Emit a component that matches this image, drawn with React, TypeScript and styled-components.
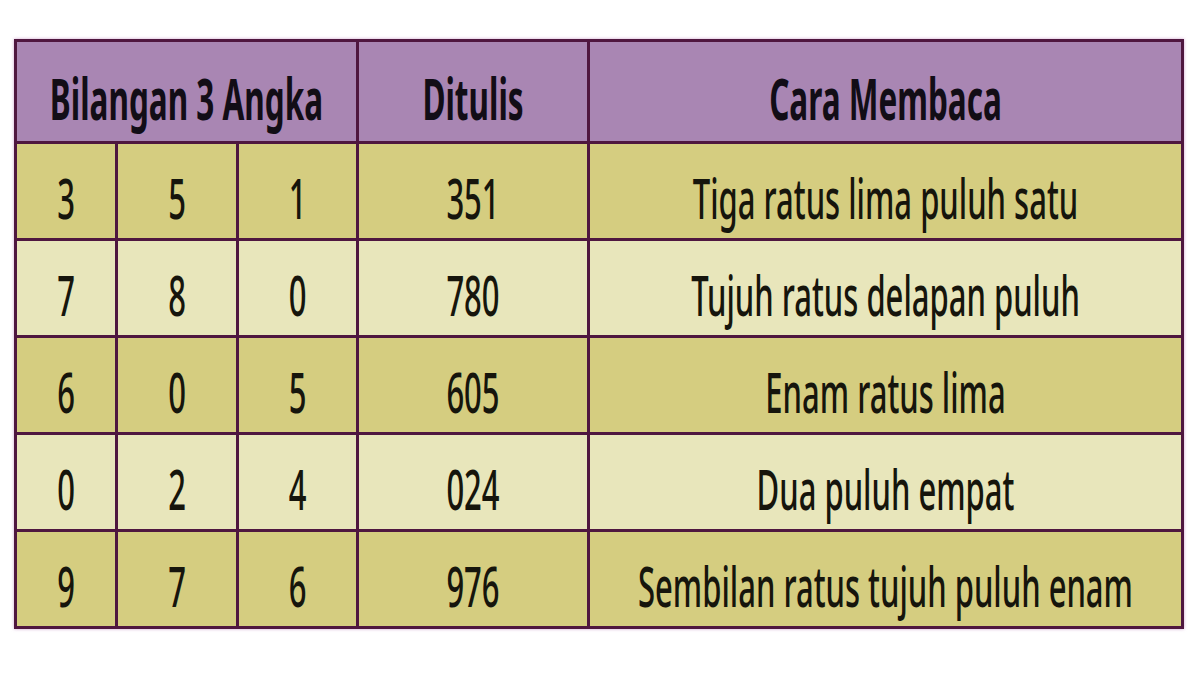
import React from "react";
import styled, { createGlobalStyle } from "styled-components";

const Global = createGlobalStyle`
  html, body { margin: 0; padding: 0; background: #ffffff; }
  body { font-family: "Noto Sans", "Open Sans", "Liberation Sans", sans-serif; }
`;

const Page = styled.div`
  width: 1200px;
  height: 675px;
  box-sizing: border-box;
  padding: 39px 0 0 14px;
  background: #fff;
`;

const Table = styled.table`
  border-collapse: collapse;
  table-layout: fixed;
  width: 1170px;
  border: 3px solid #4f173f;
  box-shadow: 0 0 3px rgba(170, 90, 170, 0.55);
`;

const HeadCell = styled.th`
  background: #a986b3;
  border: 3px solid #4f173f;
  height: 99px;
  padding: 0;
  text-align: center;
  font-weight: 700;
  color: #120d16;
`;

const Cell = styled.td<{ $shade: "dark" | "light" }>`
  background: ${(p) => (p.$shade === "dark" ? "#d5cd80" : "#e8e6bb")};
  border: 3px solid #4f173f;
  height: 94px;
  padding: 0;
  text-align: center;
  color: #16150c;
`;

const Txt = styled.span<{ $bold?: boolean }>`
  display: inline-block;
  font-size: ${(p) => (p.$bold ? "31.5px" : "31px")};
  font-weight: ${(p) => (p.$bold ? 700 : 500)};
  line-height: 40px;
  transform: scaleY(1.8);
  transform-origin: center;
  position: relative;
  top: 6px;
  white-space: nowrap;
`;

const rows: [string, string, string, string, string][] = [
  ["3", "5", "1", "351", "Tiga ratus lima puluh satu"],
  ["7", "8", "0", "780", "Tujuh ratus delapan puluh"],
  ["6", "0", "5", "605", "Enam ratus lima"],
  ["0", "2", "4", "024", "Dua puluh empat"],
  ["9", "7", "6", "976", "Sembilan ratus tujuh puluh enam"],
];

export default function App() {
  return (
    <>
      <Global />
      <Page>
        <Table>
          <colgroup>
            <col style={{ width: 101 }} />
            <col style={{ width: 121 }} />
            <col style={{ width: 120 }} />
            <col style={{ width: 231 }} />
            <col />
          </colgroup>
          <thead>
            <tr>
              <HeadCell colSpan={3}>
                <Txt $bold>Bilangan 3 Angka</Txt>
              </HeadCell>
              <HeadCell>
                <Txt $bold>Ditulis</Txt>
              </HeadCell>
              <HeadCell>
                <Txt $bold>Cara Membaca</Txt>
              </HeadCell>
            </tr>
          </thead>
          <tbody>
            {rows.map((r, i) => (
              <tr key={i}>
                {r.map((v, j) => (
                  <Cell key={j} $shade={i % 2 === 0 ? "dark" : "light"}>
                    <Txt>{v}</Txt>
                  </Cell>
                ))}
              </tr>
            ))}
          </tbody>
        </Table>
      </Page>
    </>
  );
}
